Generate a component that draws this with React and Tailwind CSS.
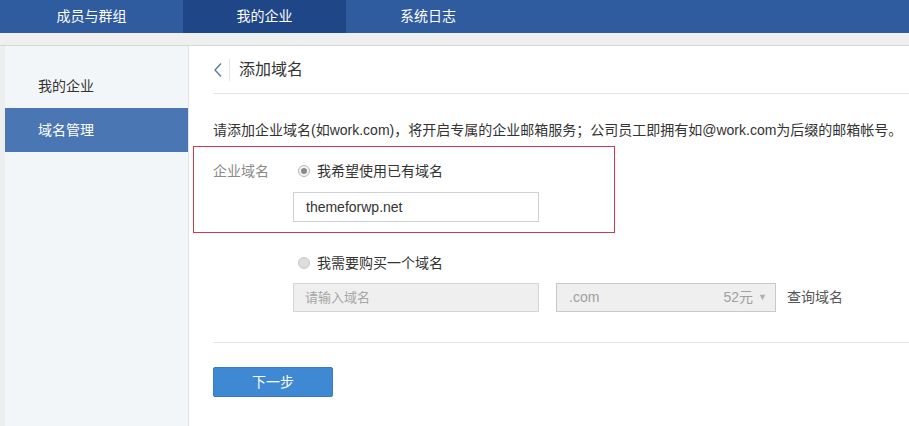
import React from 'react';

const FONT = { fontFamily: "'Liberation Sans', 'Noto Sans CJK SC', sans-serif" };

const TABS = [
  { label: '成员与群组', w: 'w-[183px]', active: false },
  { label: '我的企业', w: 'w-[163px]', active: true },
  { label: '系统日志', w: 'w-[164px]', active: false },
];

const Radio = ({ checked }) => (
  <span className={`w-[12px] h-[12px] rounded-full border flex items-center justify-center ${checked ? 'border-[#b5b5b5] bg-[#f4f4f4]' : 'border-[#c8c8c8] bg-[#dedede]'}`}>
    {checked && <span className="w-[6px] h-[6px] rounded-full bg-[#8a8a8a]" />}
  </span>
);

export default function App() {
  return (
    <div className="w-[909px] h-[426px] overflow-hidden bg-[#edefee] flex flex-col text-[#333]" style={FONT}>

      {/* TOP NAV */}
      <header className="h-[33px] bg-[#2f5b9f] flex shrink-0">
        {TABS.map(t => (
          <div
            key={t.label}
            className={`${t.w} h-full flex items-center justify-center text-white text-[14px] ${t.active ? 'bg-[#1f4686]' : ''}`}
          >
            {t.label}
          </div>
        ))}
      </header>
      <div className="h-[13px] shrink-0 bg-[#edf0ef] border-b border-[#d5d7d8]" />

      <div className="flex flex-1 pl-[5px]">
        {/* SIDEBAR */}
        <aside className="w-[184px] bg-[#f3f6f8] border-r border-[#e1e4e6] pt-[18px] text-[14px]">
          <div className="h-[44px] flex items-center pl-[33px] text-[#333]">我的企业</div>
          <div className="h-[44px] flex items-center pl-[33px] bg-[#4a77b4] text-white">域名管理</div>
        </aside>

        {/* MAIN */}
        <main className="flex-1 bg-white pl-[24px]">
          <div className="h-[48px] border-b border-[#e4e6e8] flex items-center">
            <svg width="10" height="16" viewBox="0 0 10 16">
              <polyline points="8,1.5 2,8 8,14.5" fill="none" stroke="#587ba6" strokeWidth="1.4" />
            </svg>
            <span className="w-px h-[22px] bg-[#e2e4e6] ml-[6px]" />
            <span className="ml-[9px] text-[16px] text-[#333]">添加域名</span>
          </div>

          <p className="mt-[27px] text-[14px] leading-[18px] whitespace-nowrap">
            请添加企业域名(如work.com)，将开启专属的企业邮箱服务；公司员工即拥有如@work.com为后缀的邮箱帐号。
          </p>

          {/* selected option box */}
          <div className="-ml-[20px] mt-[7px] w-[422px] h-[87px] border border-[#d2394a] pl-[19px] pt-[14px]">
            <div className="flex items-center h-[20px]">
              <span className="w-[80px] text-[14px] text-[#8a8a8a]">企业域名</span>
              <span className="ml-[5px]"><Radio checked /></span>
              <span className="ml-[7px] text-[14px]">我希望使用已有域名</span>
            </div>
            <div className="ml-[80px] mt-[11px] w-[246px] h-[30px] border border-[#cfd2d4] flex items-center pl-[12px] text-[14px] text-[#333]">
              themeforwp.net
            </div>
          </div>

          <div className="flex items-center h-[20px] mt-[20px] ml-[80px]">
            <span className="ml-[5px]"><Radio /></span>
            <span className="ml-[7px] text-[14px]">我需要购买一个域名</span>
          </div>

          <div className="flex items-center mt-[10px] ml-[80px] text-[14px]">
            <div className="w-[246px] h-[29px] border border-[#d5d5d5] bg-[#efefef] flex items-center pl-[11px] text-[13px] text-[#a6a6a6]">
              请输入域名
            </div>
            <div className="ml-[17px] w-[220px] h-[29px] border border-[#c9c9c9] bg-[#efefef] flex items-center justify-between pl-[12px] pr-[8px] text-[#a0a0a0]">
              <span>.com</span>
              <span className="flex items-center gap-[5px]">52元<span className="text-[9px] text-[#b0b0b0]">▼</span></span>
            </div>
            <span className="ml-[11px] text-[#555]">查询域名</span>
          </div>

          <div className="mt-[30px] border-t border-[#e4e6e8]" />

          <button className="mt-[24px] w-[120px] h-[30px] rounded-[2px] bg-[#3f88d4] border border-[#387bc0] text-white text-[14px] flex items-center justify-center">
            下一步
          </button>
        </main>
      </div>
    </div>
  );
}
